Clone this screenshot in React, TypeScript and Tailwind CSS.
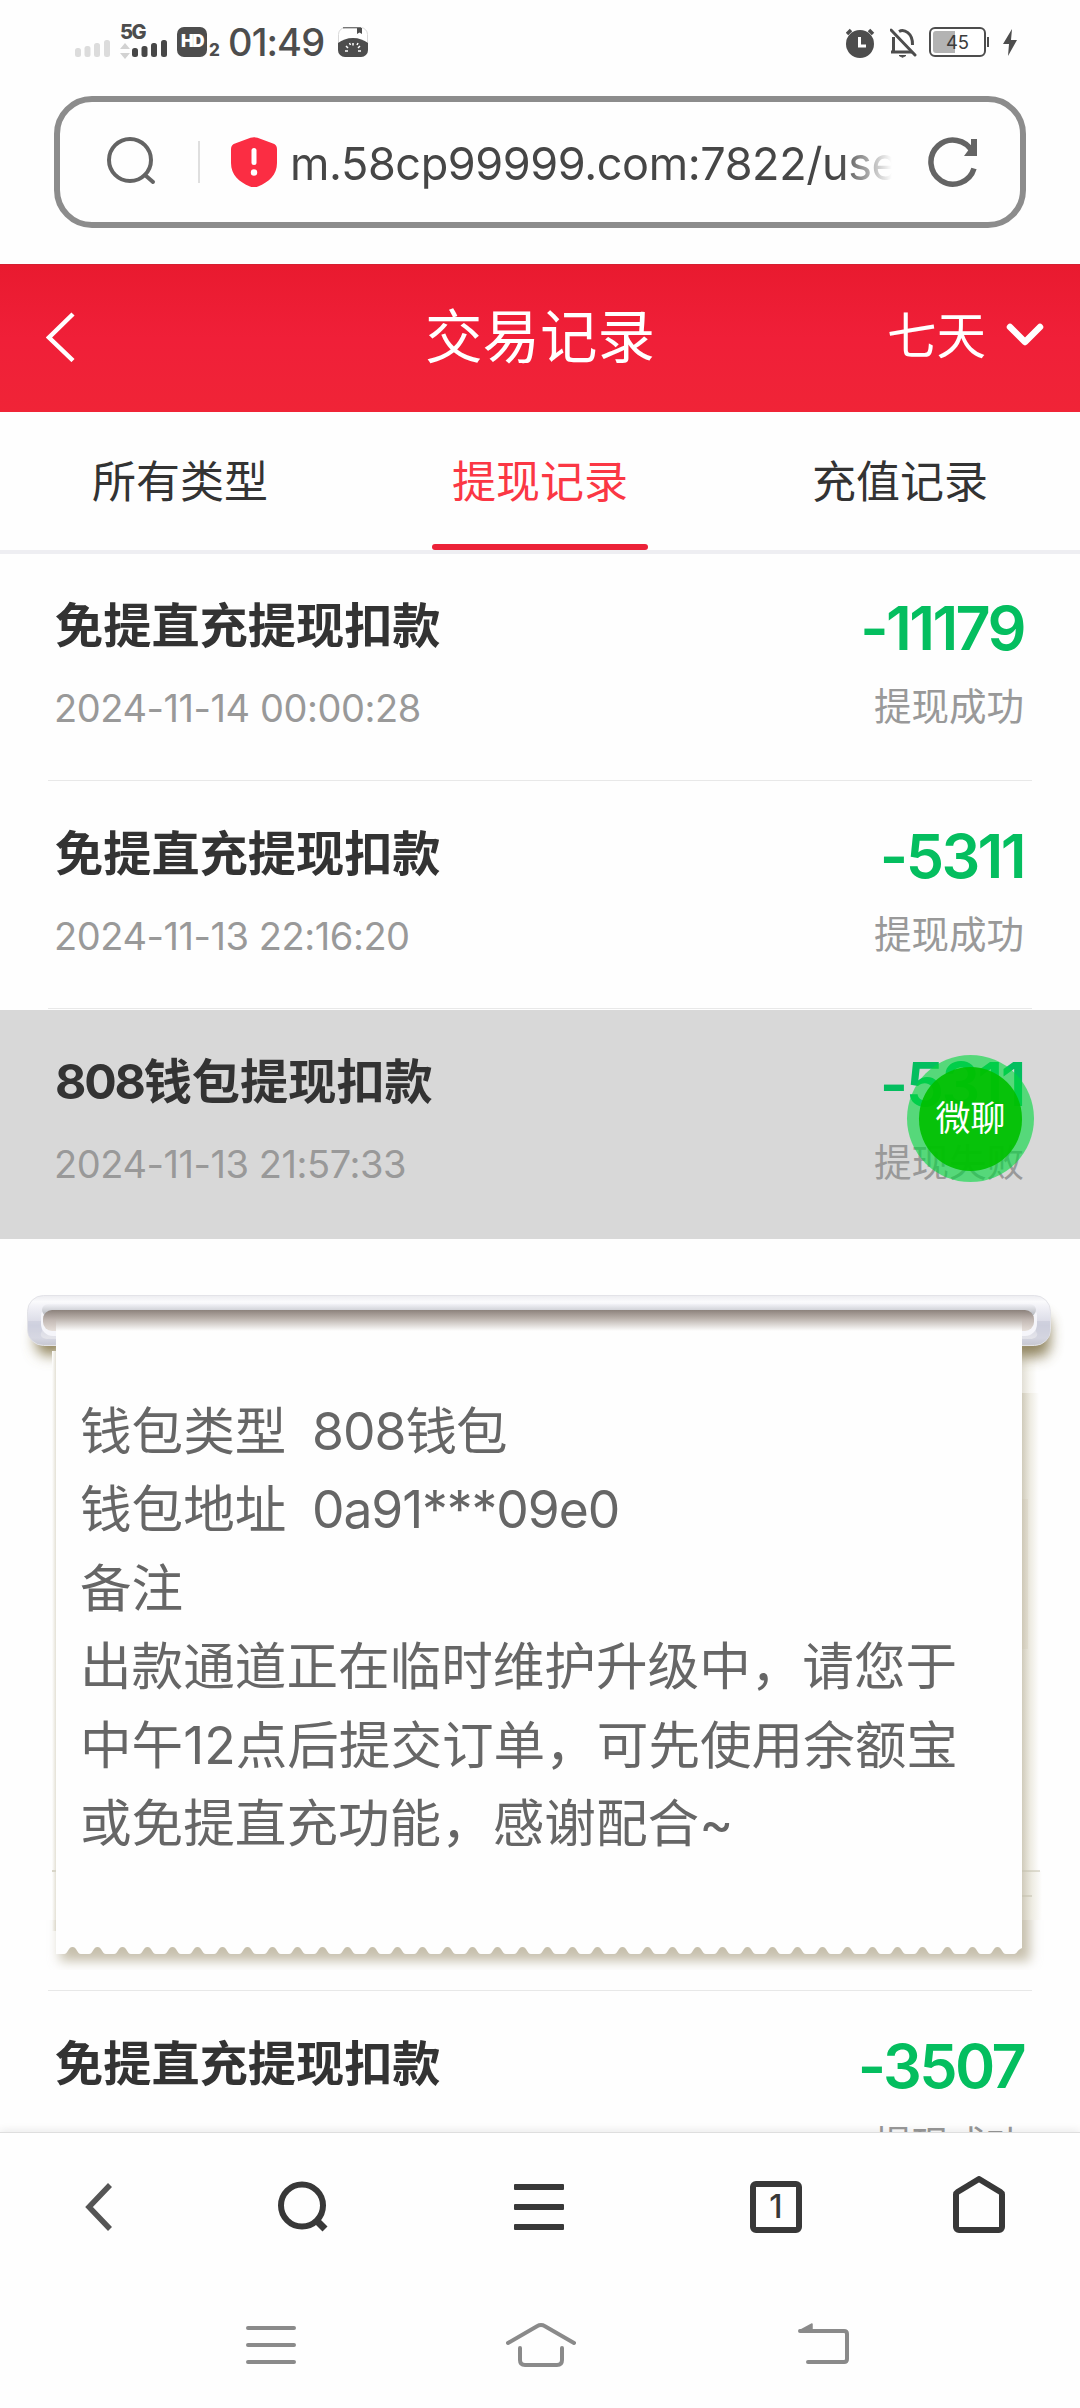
import type { ReactNode } from "react";

type RecordItem = {
  title: string;
  time?: string;
  amount: string;
  status: string;
  active?: boolean;
};

const TABS = [
  { label: "所有类型", active: false },
  { label: "提现记录", active: true },
  { label: "充值记录", active: false },
];

const RECORDS: RecordItem[] = [
  { title: "免提直充提现扣款", time: "2024-11-14 00:00:28", amount: "-11179", status: "提现成功" },
  { title: "免提直充提现扣款", time: "2024-11-13 22:16:20", amount: "-5311", status: "提现成功" },
  { title: "808钱包提现扣款", time: "2024-11-13 21:57:33", amount: "-5311", status: "提现失败", active: true },
];

const LAST_RECORD: RecordItem = { title: "免提直充提现扣款", amount: "-3507", status: "提现成功" };

const REMARK = ["出款通道正在临时维护升级中，请您于", "中午12点后提交订单，可先使用余额宝", "或免提直充功能，感谢配合~"];

function SignalBars({ color }: { color: string }) {
  return (
    <svg width="36" height="18" viewBox="0 0 36 18" fill={color}>
      <rect x="0" y="9" width="6" height="9" rx="2.5" />
      <rect x="9.5" y="7" width="6" height="11" rx="2.5" />
      <rect x="19" y="4" width="6" height="14" rx="2.5" />
      <rect x="29" y="1" width="6" height="17" rx="2.5" />
    </svg>
  );
}

function StatusBar() {
  return (
    <div className="flex h-[96px] items-start pt-[25px] pr-[61px] pl-[75px] text-[#4d4d4d]">
      <div className="mt-[14px] w-[45px]">
        <SignalBars color="#dcdcdc" />
      </div>
      <div className="w-[57px]">
        <div className="text-[20px] leading-[15px] font-extrabold tracking-[-1.5px]">5G</div>
        <div className="-mt-px flex items-start">
          <svg className="mt-[4px]" width="12" height="16" viewBox="0 0 12 16" fill="#d2d2d2">
            <path d="M5 0l5 6H0zM5 16l5-6H0z" />
          </svg>
          <SignalBars color="#474747" />
        </div>
      </div>
      <div className="mt-[2px] flex h-[30px] w-[30px] items-center justify-center rounded-[7px] bg-[#4d4d4d] text-[17px] font-black tracking-[-1.5px] text-white">
        HD
      </div>
      <span className="mt-[16px] ml-[2px] w-[19px] text-[17px] leading-[18px] font-extrabold">2</span>
      <span className="w-[110px] text-[38px] leading-[35px] font-medium tracking-[-0.9px] whitespace-nowrap">01:49</span>
      <svg className="mt-[2px]" width="30" height="30" viewBox="0 0 30 30">
        <rect x="0.5" y="0.5" width="29" height="29" rx="7" fill="#fff" stroke="#d8d8d8" />
        <path d="M5 .8h18" stroke="#4d4d4d" />
        <path d="M19 1h5v6l-2.5-1.500L19 7z" fill="#4d4d4d" />
        <path d="M0 16c4-3 9-5 15-5s11 2 15 5v7a7 7 0 0 1-7 7H7a7 7 0 0 1-7-7z" fill="#4d4d4d" />
        <path d="M7 24h3M8 19l2 2M11.500 16l1 2M15 16v2.500M19 18l1-2M20 21l2-2M20 24h3" stroke="#fff" strokeWidth="1.500" />
      </svg>

      <div className="mt-[2px] ml-auto flex">
        <svg width="44" height="32" viewBox="0 0 44 32">
          <circle cx="14" cy="17" r="14" fill="#4d4d4d" />
          <path d="M1 7l4-4M27 7l-4-4" stroke="#4d4d4d" strokeWidth="3.500" />
          <path d="M13.500 10v9H20" fill="none" stroke="#fff" strokeWidth="3" />
        </svg>
        <svg width="39" height="32" viewBox="0 0 39 32" fill="none" stroke="#4d4d4d" strokeWidth="3">
          <path d="M1 3l24 25" strokeLinecap="round" />
          <path d="M3.500 10v15M1 25h21" />
          <path d="M9 4.500C14 1.500 23 6 22.500 18" />
          <path d="M9 28.500h7l-3.500 1.800z" fill="#4d4d4d" strokeWidth="1" />
        </svg>
        <svg width="74" height="32" viewBox="0 0 74 32">
          <rect x="1" y="1" width="55" height="28" rx="5" fill="#fff" stroke="#4d4d4d" strokeWidth="2" />
          <path d="M26 4H7a3 3 0 0 0-3 3v16a3 3 0 0 0 3 3h19z" fill="#b3b3b3" />
          <rect x="58" y="10" width="2" height="10" fill="#4d4d4d" />
          <text x="28.500" y="22" textAnchor="middle" fontSize="18.500" fill="#3c3c3c">
            45
          </text>
        </svg>
        <svg width="16" height="32" viewBox="0 0 16 32">
          <path d="M9 2L0 17h6L5 29l9-16H8z" fill="#4d4d4d" />
        </svg>
      </div>
    </div>
  );
}

function AddressBar() {
  return (
    <div className="mx-[54px] mb-[36px] flex h-[132px] items-center rounded-[38px] border-[6px] border-[#8c8c8c] pr-[41px] pl-[46px]">
      <svg width="52" height="52" viewBox="0 0 52 52" fill="none" stroke="#646464" strokeWidth="4">
        <circle cx="24" cy="24" r="21" />
        <path d="M39 39l8 7" strokeLinecap="round" />
      </svg>
      <div className="ml-[40px] h-[42px] w-[2px] bg-[#dfdfdf]" />
      <svg className="ml-[31px]" width="46" height="50" viewBox="0 0 46 50">
        <path
          d="M19.500.8a10 10 0 0 1 7 0L42 6.500A6 6 0 0 1 46 12v14c0 12-8 19-19 23.500a10 10 0 0 1-8 0C8 45 0 38 0 26V12a6 6 0 0 1 4-5.500z"
          fill="#fb2d43"
        />
        <path d="M23 13.500v12" stroke="#fff" strokeWidth="5" strokeLinecap="round" />
        <circle cx="23" cy="35.500" r="3.200" fill="#fff" />
      </svg>
      <div className="ml-[13px] w-[602px] overflow-hidden [mask-image:linear-gradient(to_right,#000_550px,transparent_602px)]">
        <span className="block pt-[4px] text-[45px] leading-[60px] tracking-[-0.4px] whitespace-nowrap text-[#464646]">
          m.58cp99999.com:7822/use
        </span>
      </div>
      <svg className="ml-auto" width="52" height="52" viewBox="0 0 52 52" fill="none" stroke="#646464">
        <path d="M45.500 16A22 22 0 1 0 47 32.500" strokeWidth="5.500" />
        <path d="M46 8v12h-9z" fill="#646464" strokeWidth="0" />
        <path d="M47 3v17" strokeWidth="6" />
      </svg>
    </div>
  );
}

function Header() {
  return (
    <header className="grid h-[148px] grid-cols-3 items-center border-t border-[#d41f31] bg-linear-to-b from-[#e91a2f] via-[#f01f38] to-[#f02437] pb-[3px] text-white">
      <svg className="ml-[46px]" width="30" height="50" viewBox="0 0 30 50" fill="none" stroke="#fff" strokeWidth="4.500">
        <path d="M27 2L3 25.500l24 23" />
      </svg>
      <h1 className="text-center text-[57.500px] leading-[70px] whitespace-nowrap">交易记录</h1>
      <div className="flex items-center justify-end pr-[36px] pb-[2px] text-[49.500px] leading-[60px]">
        <span>七天</span>
        <svg className="mb-[3px] ml-[20px]" width="38" height="24" viewBox="0 0 38 24" fill="none" stroke="#fff" strokeWidth="6.500">
          <path d="M4 4l15 15L34 4" strokeLinecap="round" strokeLinejoin="round" />
        </svg>
      </div>
    </header>
  );
}

function Row({ item }: { item: RecordItem }) {
  return (
    <li className={item.active ? "h-[230px] border-t border-[#fefefe] bg-[#d8d8d8]" : "h-[228px]"}>
      <div
        className={
          item.active
            ? "mx-[48px] flex h-full justify-between pt-[37px] pr-[8px] pl-[7px]"
            : "mx-[48px] flex h-full justify-between border-b border-[#e8e8e8] pt-[38px] pr-[8px] pl-[7px]"
        }
      >
        <div>
          <div className="text-[48.200px] leading-[70px] font-bold text-[#333]">
            {item.title.startsWith("808") ? (
              <>
                <span className="tracking-[-2.200px]">808</span>
                {item.title.slice(3)}
              </>
            ) : (
              item.title
            )}
          </div>
          <div className="-ml-px mt-[22px] text-[38px] leading-[50px] tracking-[-0.450px] text-[#999]">{item.time}</div>
        </div>
        <div className="text-right">
          <div className="-mt-px text-[61px] leading-[76px] font-semibold tracking-[-2.600px] text-[#04be5f]">
            {item.amount}
          </div>
          <div className="mt-[14px] text-[37.500px] leading-[54px] text-[#999]">{item.status}</div>
        </div>
      </div>
    </li>
  );
}

/** Paper roll hanging from a metal bar, with a scalloped lower edge. */
function PaperBackdrop() {
  const right = 1022;
  let edge = "M56 87V715";
  for (let x = 64; x + 17 < right; x += 25) {
    edge += ` H${x} C${x + 4} 715 ${x + 4} 708 ${x + 8.5} 708 S${x + 13} 715 ${x + 17} 715`;
  }
  edge += ` H1014 C1017 715 1018 710 ${right} 709 V87 Z`;

  return (
    <svg className="absolute inset-0" width="1080" height="751" viewBox="0 0 1080 751">
      <defs>
        <linearGradient id="bar" x1="0" y1="0" x2="0" y2="1">
          <stop offset="0" stopColor="#ececf0" />
          <stop offset="0.12" stopColor="#fafafc" />
          <stop offset="0.25" stopColor="#efeff5" />
          <stop offset="0.6" stopColor="#d6d7e3" />
          <stop offset="0.85" stopColor="#e4e4ea" />
          <stop offset="1" stopColor="#c8c8ce" />
        </linearGradient>
        <linearGradient id="lip" x1="0" y1="0" x2="0" y2="1">
          <stop offset="0" stopColor="#f2f2f7" />
          <stop offset="1" stopColor="#b2b5bb" />
        </linearGradient>
        <linearGradient id="slot" x1="0" y1="0" x2="0" y2="1">
          <stop offset="0" stopColor="#8c827c" />
          <stop offset="0.4" stopColor="#b9b0aa" />
          <stop offset="1" stopColor="#fefefe" />
        </linearGradient>
        <linearGradient id="hollow" x1="0" y1="0" x2="0" y2="1">
          <stop offset="0" stopColor="#8c827c" />
          <stop offset="0.5" stopColor="#c4bab5" />
          <stop offset="1" stopColor="#e6dfda" />
        </linearGradient>
        <linearGradient id="side" x1="0" y1="0" x2="1" y2="0">
          <stop offset="0" stopColor="#d0cbbb" />
          <stop offset="0.5" stopColor="#eeece3" />
          <stop offset="1" stopColor="#fefefe" />
        </linearGradient>
        <linearGradient id="leftEdge" x1="1" y1="0" x2="0" y2="0">
          <stop offset="0" stopColor="#e4e1d6" />
          <stop offset="1" stopColor="#fefefe" />
        </linearGradient>
        <filter id="soft" x="-60%" y="-60%" width="220%" height="220%">
          <feGaussianBlur stdDeviation="7" />
        </filter>
        <filter id="footBlur" x="-5%" y="-30%" width="110%" height="160%">
          <feGaussianBlur stdDeviation="6" />
        </filter>
        <clipPath id="footClip">
          <rect x="0" y="681" width="1080" height="50" />
        </clipPath>
      </defs>
      <rect x="1022" y="108" width="15" height="46" fill="url(#side)" opacity="0.6" />
      <rect x="36" y="84" width="30" height="32" rx="12" fill="#8f8258" filter="url(#soft)" />
      <rect x="1010" y="76" width="40" height="42" rx="12" fill="#857850" opacity="0.9" filter="url(#soft)" />
      <rect x="27.500" y="56.500" width="1023" height="50" rx="16" fill="url(#bar)" stroke="#e3e3e8" />
      <path d="M28 82h14v10q-4 6 4 8h10v5H40q-12-3-12-14z" fill="#c3c5d6" opacity="0.4" />
      <path d="M1050 82h-14v10q4 6-4 8h-10v5h16q12-3 12-14z" fill="#c3c5d6" opacity="0.5" />
      <rect x="41" y="65" width="996" height="32" rx="12" fill="#f5f5fa" />
      <rect x="42" y="65" width="994" height="12" rx="6" fill="url(#lip)" />
      <rect x="43" y="71" width="991" height="21" rx="9" fill="url(#hollow)" />
      <rect x="1022" y="154" width="17" height="527" fill="url(#side)" />
      <rect x="1022" y="260" width="6" height="150" fill="#c7bba5" opacity="0.18" />
      <rect x="1022" y="632" width="20" height="49" fill="url(#side)" />
      <path d="M1022 632h18M1022 657h10" stroke="#c4c0ac" strokeWidth="2" opacity="0.5" />
      <rect x="52" y="112" width="4" height="580" fill="url(#leftEdge)" />
      <path d="M52 632h4" stroke="#d8d5c8" strokeWidth="2" />
      <g clipPath="url(#footClip)">
        <rect x="60" y="600" width="970" height="122" fill="#c6bfac" filter="url(#footBlur)" />
      </g>
      <path d={edge} fill="#fefefe" />
      <rect x="56" y="71" width="966" height="21" fill="url(#slot)" />
    </svg>
  );
}

function DetailPanel() {
  return (
    <li className="relative h-[751px]">
      <PaperBackdrop />
      <div className="relative pt-[153px] pl-[80px] text-[51.600px] leading-[78.400px] whitespace-pre text-[#666]">
        <div className="flex">
          <span className="w-[232px]">钱包类型</span>
          <span className="tracking-[-1px]">808钱包</span>
        </div>
        <div className="flex">
          <span className="w-[232px]">钱包地址</span>
          <span className="tracking-[-1.100px]">0a91***09e0</span>
        </div>
        <div>备注</div>
        {REMARK.map((line) => (
          <div key={line}>{line}</div>
        ))}
      </div>
    </li>
  );
}

function ChatBubble() {
  return (
    <button className="absolute top-[1055px] left-[907px] flex h-[127px] w-[127px] items-center justify-center rounded-full bg-[#00d83c]/60">
      <span className="flex h-[104px] w-[103px] items-center justify-center rounded-full bg-[#00c000]/92 text-[35px] text-white">
        微聊
      </span>
    </button>
  );
}

function BarSlot({ className, children }: { className: string; children: ReactNode }) {
  return <div className={`flex items-center justify-center ${className}`}>{children}</div>;
}

function BottomBars() {
  return (
    <footer className="relative h-[276px] border-t border-[#dedede] bg-[#fefefe] shadow-[0_-2px_8px_rgba(0,0,0,0.08)]">
      <div className="flex h-[148px] items-center pl-[84px]">
        <BarSlot className="w-[30px]">
          <svg width="30" height="50" viewBox="0 0 30 50" fill="none" stroke="#555" strokeWidth="5.500">
            <path d="M26 3L5 25l21 22" />
          </svg>
        </BarSlot>
        <BarSlot className="ml-[162px] w-[54px]">
          <svg width="54" height="54" viewBox="0 0 54 54" fill="none" stroke="#383838" strokeWidth="6">
            <circle cx="26" cy="25.500" r="21" />
            <path d="M40 40l9 9" strokeWidth="7" />
          </svg>
        </BarSlot>
        <BarSlot className="ml-[184px] w-[50px]">
          <svg width="50" height="46" viewBox="0 0 50 46" fill="#383838">
            <rect y="0" width="50" height="6" rx="1" />
            <rect y="20" width="50" height="6" rx="1" />
            <rect y="40" width="50" height="6" rx="1" />
          </svg>
        </BarSlot>
        <div className="ml-[186px] flex h-[52px] w-[52px] items-center justify-center rounded-[6px] border-[6px] border-[#383838] text-[32px] font-medium text-[#383838]">
          1
        </div>
        <BarSlot className="ml-[151px] w-[52px]">
          <svg className="-mt-[5px]" width="52" height="57" viewBox="0 0 52 57" fill="none" stroke="#383838" strokeWidth="6">
            <path
              d="M3 18.500a3 3 0 0 1 1.500-2.500L26 3l21.500 13a3 3 0 0 1 1.500 2.500V51a3 3 0 0 1-3 3H6a3 3 0 0 1-3-3z"
              strokeLinejoin="round"
            />
          </svg>
        </BarSlot>
      </div>
      <div className="mt-[41px] flex h-[46px] items-center pl-[246px]">
        <svg width="50" height="44" viewBox="0 0 50 44" stroke="#8a8a8a" strokeWidth="4" strokeLinecap="round">
          <path d="M2 5h46M2 22h46M2 39h46" />
        </svg>
        <svg
          className="ml-[210px]"
          width="70"
          height="44"
          viewBox="0 0 70 44"
          fill="none"
          stroke="#8a8a8a"
          strokeWidth="4"
          strokeLinecap="round"
        >
          <path d="M2 20L31 3.200q4-2.200 8 0L68 20" />
          <path d="M14 25v12q0 5 5 5h32q5 0 5-5V25" />
        </svg>
        <svg
          className="ml-[222px]"
          width="52"
          height="44"
          viewBox="0 0 52 44"
          fill="none"
          stroke="#8a8a8a"
          strokeWidth="4"
          strokeLinecap="round"
        >
          <path d="M2 8h44q3 0 3 3v25q0 3-3 3H10" />
          <path d="M2 7.500L14 1v7z" fill="#8a8a8a" strokeWidth="1.500" strokeLinejoin="round" />
        </svg>
      </div>
    </footer>
  );
}

export default function App() {
  return (
    <div className="relative flex h-[2408px] w-[1080px] flex-col overflow-hidden bg-[#fefefe] font-[Inter,'Noto_Sans_CJK_SC',sans-serif]">
      <StatusBar />
      <AddressBar />
      <Header />
      <nav className="grid h-[142px] shrink-0 grid-cols-3 border-b-4 border-[#eeeef2] text-[44px]">
        {TABS.map((tab) => (
          <div
            key={tab.label}
            className={tab.active ? "flex flex-col items-center text-[#fb3744]" : "flex flex-col items-center text-[#333]"}
          >
            <span className="flex h-[132px] items-center pt-[7px]">{tab.label}</span>
            {tab.active && <span className="h-[6px] w-[216px] rounded-full bg-[#ec2238]" />}
          </div>
        ))}
      </nav>
      <ul className="-mt-px min-h-0 flex-1 overflow-hidden">
        {RECORDS.map((item) => (
          <Row key={item.title + item.time} item={item} />
        ))}
        <DetailPanel />
        <li className="mx-[48px] h-px bg-[#e8e8e8]" />
        <Row item={LAST_RECORD} />
      </ul>
      <BottomBars />
      <ChatBubble />
    </div>
  );
}
